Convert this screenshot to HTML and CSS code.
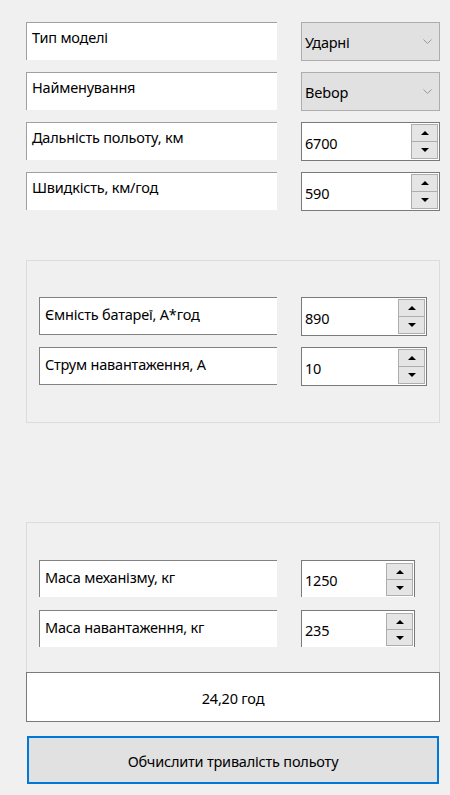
FILE: index.html
```html
<!DOCTYPE html>
<html lang="uk">
<head>
<meta charset="utf-8">
<title>Тривалість польоту</title>
<link rel="stylesheet" href="styles.css">
</head>
<body>
<div class="app">
  <div class="rows">
    <div class="row">
      <div class="lbl">Тип моделі</div>
      <div class="combo"><span>Ударні</span><svg class="chev" width="9" height="5" viewBox="0 0 9 5"><polyline points="0.5,0.5 4.5,4.5 8.5,0.5" fill="none" stroke="#999" stroke-width="1"/></svg></div>
    </div>
    <div class="row">
      <div class="lbl">Найменування</div>
      <div class="combo"><span>Bebop</span><svg class="chev" width="9" height="5" viewBox="0 0 9 5"><polyline points="0.5,0.5 4.5,4.5 8.5,0.5" fill="none" stroke="#999" stroke-width="1"/></svg></div>
    </div>
    <div class="row">
      <div class="lbl">Дальність польоту, км</div>
      <div class="spin"><span class="val">6700</span><div class="btns"><div class="b"><i class="up"></i></div><div class="b"><i class="dn"></i></div></div></div>
    </div>
    <div class="row">
      <div class="lbl">Швидкість, км/год</div>
      <div class="spin"><span class="val">590</span><div class="btns"><div class="b"><i class="up"></i></div><div class="b"><i class="dn"></i></div></div></div>
    </div>
  </div>

  <div class="group g1">
    <div class="row">
      <div class="lbl">Ємність батареї, А*год</div>
      <div class="spin"><span class="val">890</span><div class="btns"><div class="b"><i class="up"></i></div><div class="b"><i class="dn"></i></div></div></div>
    </div>
    <div class="row">
      <div class="lbl">Струм навантаження, А</div>
      <div class="spin"><span class="val">10</span><div class="btns"><div class="b"><i class="up"></i></div><div class="b"><i class="dn"></i></div></div></div>
    </div>
  </div>

  <div class="group g2">
    <div class="row">
      <div class="lbl">Маса механізму, кг</div>
      <div class="spin"><span class="val">1250</span><div class="btns"><div class="b"><i class="up"></i></div><div class="b"><i class="dn"></i></div></div></div>
    </div>
    <div class="row">
      <div class="lbl">Маса навантаження, кг</div>
      <div class="spin"><span class="val">235</span><div class="btns"><div class="b"><i class="up"></i></div><div class="b"><i class="dn"></i></div></div></div>
    </div>
  </div>

  <div class="result">24,20 год</div>
  <button class="calc">Обчислити тривалість польоту</button>
</div>
</body>
</html>
```

FILE: styles.css
```css
html, body {
  margin: 0;
  padding: 0;
  background: #f0f0f0;
}
body {
  font-family: "Noto Sans", "DejaVu Sans", sans-serif;
  font-size: 14.5px;
  letter-spacing: -0.2px;
  color: #000;
}
.app {
  width: 414px;
  padding: 22px 0 0 26px;
}
.rows .row, .group .row {
  display: flex;
  align-items: flex-start;
  justify-content: space-between;
  height: 39px;
  margin-bottom: 11px;
}
.row:last-child {
  margin-bottom: 0;
}
.lbl {
  box-sizing: border-box;
  width: 251px;
  height: 38px;
  background: #fff;
  border-top: 1px solid #a0a0a0;
  border-left: 1px solid #a0a0a0;
  padding: 4px 5px 0;
  line-height: 20px;
  white-space: nowrap;
}
.combo {
  box-sizing: border-box;
  width: 139px;
  height: 39px;
  background: #e1e1e1;
  border: 1px solid #adadad;
  display: flex;
  align-items: center;
  padding-left: 3px;
  line-height: 20px;
}
.chev {
  margin-left: auto;
  margin-right: 7px;
}
.spin {
  box-sizing: border-box;
  width: 139px;
  height: 39px;
  background: #fff;
  border: 1px solid #7a7a7a;
  display: flex;
  align-items: center;
  padding-left: 3px;
  line-height: 20px;
}
.val {
  padding-top: 2px;
}
.btns {
  margin-left: auto;
  margin-right: 1px;
  width: 27px;
  height: calc(100% - 2px);
  display: flex;
  flex-direction: column;
  box-sizing: border-box;
  border: 1px solid #adadad;
  background: #adadad;
  gap: 1px;
}
.b {
  flex: 1;
  background: #e5e5e5;
  display: flex;
  align-items: center;
  justify-content: center;
}
.b i {
  display: block;
  width: 0;
  height: 0;
  border-left: 4px solid transparent;
  border-right: 4px solid transparent;
}
.b .up {
  border-bottom: 4px solid #000;
}
.b .dn {
  border-top: 4px solid #000;
}
.group {
  box-sizing: border-box;
  width: 414px;
  border: 1px solid #dcdcdc;
  padding: 36px 12px 0;
}
.group .lbl {
  width: 238px;
  border-color: #828282;
  padding-top: 6px;
}
.g1 {
  margin-top: 49px;
  height: 163px;
}
.g1 .lbl {
  border-bottom: 1px solid #828282;
}
.g1 .spin {
  width: 126px;
}
.g2 {
  margin-top: 99px;
  height: 150px;
  border-bottom: none;
  padding-top: 37px;
}
.g2 .row {
  height: 37px;
  margin-bottom: 13px;
}
.g2 .lbl {
  height: 37px;
}
.g2 .spin {
  width: 114px;
  height: 37px;
  border-bottom: none;
  margin-right: 12px;
}
.g2 .btns {
  height: 33px;
  margin-top: 1px;
}
.result {
  box-sizing: border-box;
  width: 414px;
  height: 50px;
  background: #fff;
  border: 1px solid #7a7a7a;
  display: flex;
  align-items: center;
  justify-content: center;
  padding-top: 2px;
}
.calc {
  display: block;
  box-sizing: border-box;
  margin: 14px 0 0 1px;
  width: 412px;
  height: 48px;
  background: #e1e1e1;
  border: 2px solid #0078d7;
  font-family: inherit;
  font-size: 14.5px;
  letter-spacing: -0.2px;
  color: #000;
  padding: 2px 0 0;
}
```
